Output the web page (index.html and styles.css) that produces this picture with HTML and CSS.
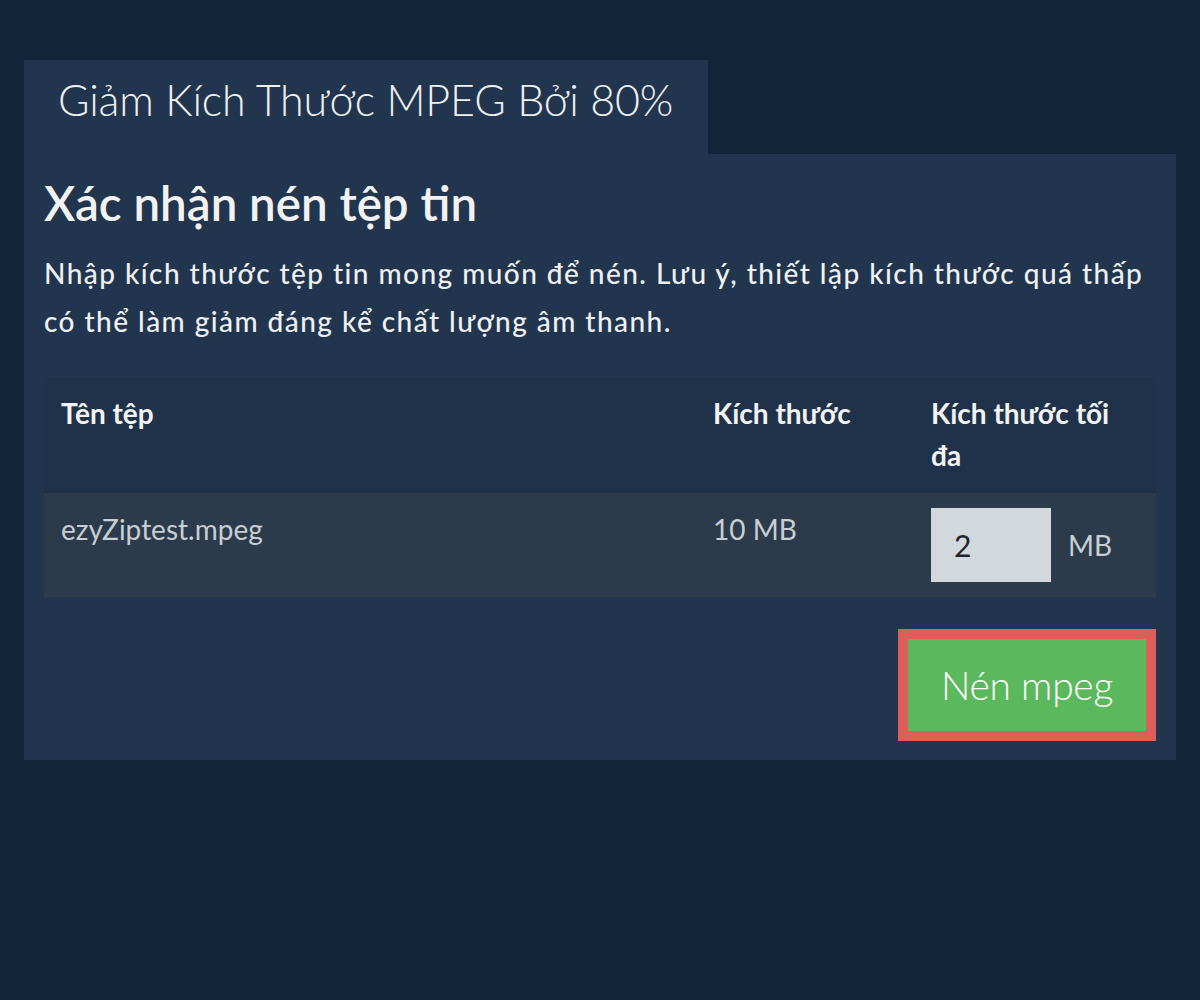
FILE: index.html
```html
<!DOCTYPE html>
<html lang="vi">
<head>
<meta charset="utf-8">
<title>Giảm Kích Thước MPEG Bởi 80%</title>
<link rel="stylesheet" href="styles.css">
</head>
<body>
<main class="wrap">
  <div class="tab">Giảm Kích Thước MPEG Bởi 80%</div>
  <section class="panel">
    <h1 class="title">Xác nhận nén tệp tin</h1>
    <p class="desc">Nhập kích thước tệp tin mong muốn để nén. Lưu ý, thiết lập kích thước quá thấp có thể làm giảm đáng kể chất lượng âm thanh.</p>
    <table class="files">
      <thead>
        <tr>
          <th class="c-name">Tên tệp</th>
          <th class="c-size">Kích thước</th>
          <th class="c-max">Kích thước tối đa</th>
        </tr>
      </thead>
      <tbody>
        <tr>
          <td class="c-name">ezyZiptest.mpeg</td>
          <td class="c-size">10 MB</td>
          <td class="c-max"><div class="max-field"><input class="max-input" type="text" value="2"><span class="unit">MB</span></div></td>
        </tr>
      </tbody>
    </table>
    <div class="actions">
      <button class="btn" type="button">Nén mpeg</button>
    </div>
  </section>
</main>
</body>
</html>
```

FILE: styles.css
```css
* { box-sizing: border-box; }
html, body { margin: 0; padding: 0; }
body {
  background: #10243a;
  font-family: Lato, "Noto Sans", sans-serif;
  color: #f2f2f2;
  min-height: 1000px;
}
.wrap {
  padding: 60px 24px 0 24px;
}
.tab {
  display: inline-block;
  background: #21354f;
  font-size: 43px;
  font-weight: 300;
  letter-spacing: -0.15px;
  line-height: 52px;
  padding: 14px 35px 28px 34px;
  color: #f0f0f0;
}
.panel {
  background: #21354f;
  padding: 22px 20px 19px 20px;
}
.title {
  margin: 0;
  font-size: 47.5px;
  font-weight: 600;
  line-height: 53px;
  color: #f2f2f2;
}
.desc {
  margin: 21px 0 32px 0;
  font-size: 28px;
  font-weight: 500;
  letter-spacing: 1.45px;
  line-height: 47.6px;
  color: #f0f0f0;
}
.files {
  width: 100%;
  border-collapse: collapse;
  font-size: 28px;
  line-height: 42px;
}
.files th {
  background: #1f3249;
  text-align: left;
  vertical-align: top;
  font-weight: 700;
  color: #f3f3f3;
  padding: 15px 17px;
  border-bottom: 2px solid #1f3249;
}
.files td {
  background: #2b3b4c;
  vertical-align: top;
  color: #c9ced3;
  padding: 15px 17px;
}
.c-name { width: 652px; }
.c-size { width: 218px; }
.max-field {
  display: flex;
  align-items: center;
  gap: 17px;
}
.max-input {
  width: 120px;
  height: 74px;
  border: 0;
  background: #d3d8dc;
  color: #1b2430;
  font-family: Lato, "Noto Sans", sans-serif;
  font-size: 30px;
  padding: 0 0 0 23px;
  outline: none;
}
.unit {
  color: #c9ced3;
  font-size: 28px;
}
.actions {
  display: flex;
  justify-content: flex-end;
  margin-top: 32px;
}
.btn {
  background: #5cb85c;
  border: 10px solid #dc5f5a;
  color: #ffffff;
  font-family: Lato, "Noto Sans", sans-serif;
  font-size: 39px;
  font-weight: 300;
  letter-spacing: -0.3px;
  line-height: 48px;
  padding: 22px 33px;
  cursor: pointer;
}
```
